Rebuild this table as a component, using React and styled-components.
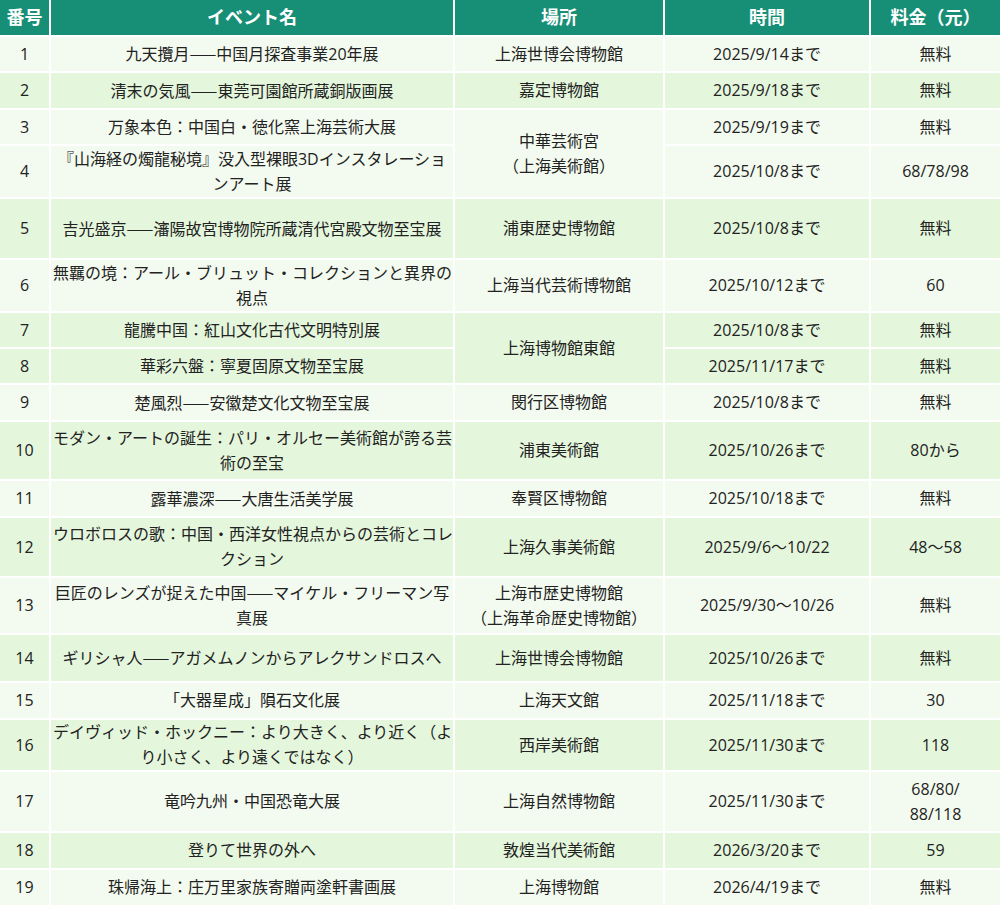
import { Fragment } from "react";
import styled, { createGlobalStyle } from "styled-components";

const GlobalStyle = createGlobalStyle`
    html, body {
        margin: 0;
        padding: 0;
        background: #fff;
    }
    body {
        font-family: "Open Sans", "Noto Sans CJK JP", "Noto Sans CJK SC", sans-serif;
        color: #222;
    }
`;

const Table = styled.table`
    width: 1000px;
    table-layout: fixed;
    border-collapse: separate;
    border-spacing: 0;
    font-size: 16px;
    line-height: 25px;
`;

const HeadCell = styled.th`
    height: 35px;
    padding: 0;
    background: #178f77;
    color: #fff;
    font-weight: 700;
    font-size: 18px;
    text-align: center;
    vertical-align: middle;
    border-right: 2px solid #fff;
    border-bottom: 2px solid #fff;

    &:last-child {
        border-right: none;
    }
`;

const Row = styled.tr`
    height: ${({ $h }) => $h}px;
`;

const Cell = styled.td`
    padding: 0 2px;
    background: ${({ $green }) => ($green ? "#e4f6dc" : "#f3faef")};
    text-align: center;
    vertical-align: middle;
    white-space: pre;
    border-right: 2px solid #fff;
    border-bottom: 2px solid #fff;

    &:last-child {
        border-right: none;
    }
`;

const Line = styled.div`
    white-space: nowrap;
`;

// the long dash is drawn by the CJK face so the two dashes join into one line
const Dash = styled.span`
    font-family: "Noto Sans CJK JP", sans-serif;
`;

const renderName = text =>
    text.split("\n").map((line, li) => (
        <Line key={li}>
            {line.split("——").map((part, i) => (
                <Fragment key={i}>
                    {i > 0 && <Dash>——</Dash>}
                    {part}
                </Fragment>
            ))}
        </Line>
    ));

const columns = [
    { title: "番号", width: 51 },
    { title: "イベント名", width: 404 },
    { title: "場所", width: 210 },
    { title: "時間", width: 206 },
    { title: "料金（元）", width: 129 },
];

// venue: null => covered by the rowspan above
const rows = [
    { no: 1, name: "九天攬月——中国月探査事業20年展", venue: "上海世博会博物館", time: "2025/9/14まで", fee: "無料", green: false, h: 36 },
    { no: 2, name: "清末の気風——東莞可園館所蔵銅版画展", venue: "嘉定博物館", time: "2025/9/18まで", fee: "無料", green: true, h: 37 },
    { no: 3, name: "万象本色：中国白・徳化窯上海芸術大展", venue: "中華芸術宮\n（上海美術館）", span: 2, time: "2025/9/19まで", fee: "無料", green: false, h: 36 },
    { no: 4, name: "『山海経の燭龍秘境』没入型裸眼3Dインスタレーショ\nンアート展", venue: null, time: "2025/10/8まで", fee: "68/78/98", green: false, h: 53 },
    { no: 5, name: "吉光盛京——瀋陽故宮博物院所蔵清代宮殿文物至宝展", venue: "浦東歴史博物館", time: "2025/10/8まで", fee: "無料", green: true, h: 61 },
    { no: 6, name: "無羈の境：アール・ブリュット・コレクションと異界の\n視点", venue: "上海当代芸術博物館", time: "2025/10/12まで", fee: "60", green: false, h: 53 },
    { no: 7, name: "龍騰中国：紅山文化古代文明特別展", venue: "上海博物館東館", span: 2, time: "2025/10/8まで", fee: "無料", green: true, h: 36 },
    { no: 8, name: "華彩六盤：寧夏固原文物至宝展", venue: null, time: "2025/11/17まで", fee: "無料", green: true, h: 36 },
    { no: 9, name: "楚風烈——安徽楚文化文物至宝展", venue: "閔行区博物館", time: "2025/10/8まで", fee: "無料", green: false, h: 37 },
    { no: 10, name: "モダン・アートの誕生：パリ・オルセー美術館が誇る芸\n術の至宝", venue: "浦東美術館", time: "2025/10/26まで", fee: "80から", green: true, h: 59 },
    { no: 11, name: "露華濃深——大唐生活美学展", venue: "奉賢区博物館", time: "2025/10/18まで", fee: "無料", green: false, h: 37 },
    { no: 12, name: "ウロボロスの歌：中国・西洋女性視点からの芸術とコレ\nクション", venue: "上海久事美術館", time: "2025/9/6～10/22", fee: "48～58", green: true, h: 60 },
    { no: 13, name: "巨匠のレンズが捉えた中国——マイケル・フリーマン写\n真展", venue: "上海市歴史博物館\n（上海革命歴史博物館）", time: "2025/9/30～10/26", fee: "無料", green: false, h: 57 },
    { no: 14, name: "ギリシャ人——アガメムノンからアレクサンドロスへ", venue: "上海世博会博物館", time: "2025/10/26まで", fee: "無料", green: true, h: 48 },
    { no: 15, name: "「大器星成」隕石文化展", venue: "上海天文館", time: "2025/11/18まで", fee: "30", green: false, h: 37 },
    { no: 16, name: "デイヴィッド・ホックニー：より大きく、より近く（よ\nり小さく、より遠くではなく）", venue: "西岸美術館", time: "2025/11/30まで", fee: "118", green: true, h: 52 },
    { no: 17, name: "竜吟九州・中国恐竜大展", venue: "上海自然博物館", time: "2025/11/30まで", fee: "68/80/\n88/118", green: false, h: 61 },
    { no: 18, name: "登りて世界の外へ", venue: "敦煌当代美術館", time: "2026/3/20まで", fee: "59", green: true, h: 37 },
    { no: 19, name: "珠帰海上：庄万里家族寄贈両塗軒書画展", venue: "上海博物館", time: "2026/4/19まで", fee: "無料", green: false, h: 37 },
];

export default function App() {
    return (
        <>
            <GlobalStyle />
            <Table>
                <colgroup>
                    {columns.map(col => (
                        <col key={col.title} style={{ width: col.width }} />
                    ))}
                </colgroup>
                <thead>
                    <tr>
                        {columns.map(col => (
                            <HeadCell key={col.title}>{col.title}</HeadCell>
                        ))}
                    </tr>
                </thead>
                <tbody>
                    {rows.map(row => (
                        <Row key={row.no} $h={row.h}>
                            <Cell $green={row.green}>{row.no}</Cell>
                            <Cell $green={row.green}>{renderName(row.name)}</Cell>
                            {row.venue !== null && (
                                <Cell $green={row.green} rowSpan={row.span ?? 1}>{row.venue}</Cell>
                            )}
                            <Cell $green={row.green}>{row.time}</Cell>
                            <Cell $green={row.green}>{row.fee}</Cell>
                        </Row>
                    ))}
                </tbody>
            </Table>
        </>
    );
}
